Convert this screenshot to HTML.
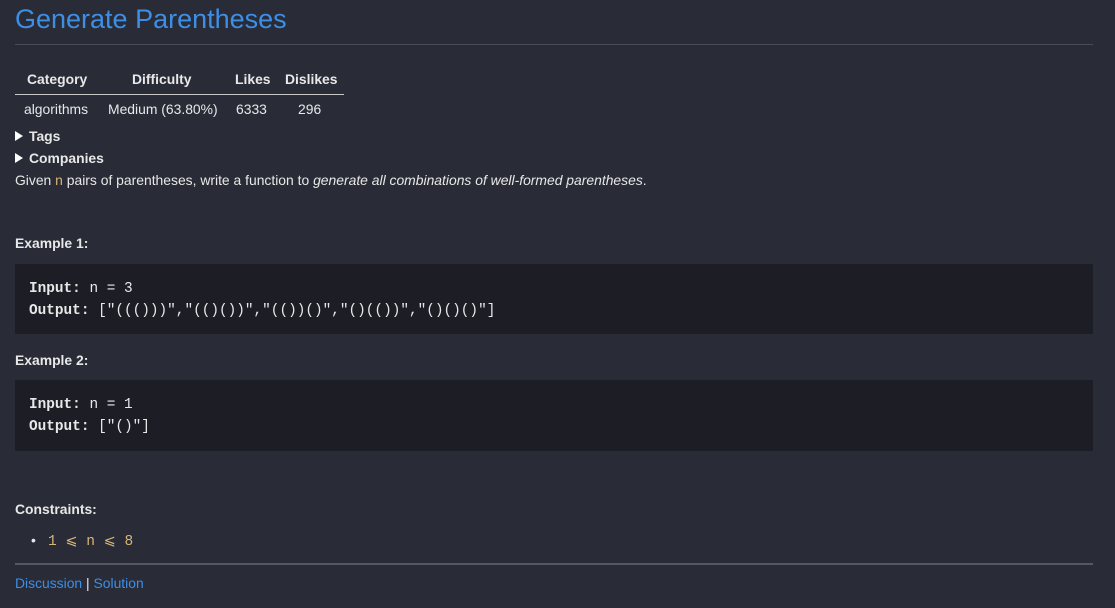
<!DOCTYPE html>
<html><head><style>
body{margin:0;background:#292b36;color:#e8e8e8;font-family:"Liberation Sans",sans-serif;font-size:13.9px;width:1115px;height:608px;overflow:hidden;position:relative}
.a{position:absolute;white-space:nowrap}
h1{position:absolute;left:15px;top:4px;margin:0;font-weight:normal;font-size:27px;color:#3d8fe6}
.hr{position:absolute;left:15px;width:1078px;height:1px;background:#4a4c58}
b{font-weight:bold}
.code{position:absolute;left:15px;width:1078px;background:#1d1e25;font-family:"Liberation Mono",monospace;font-size:14.4px;line-height:22px;color:#e8e8e8}
.y{color:#d7b57a}
a{color:#3d8fe6;text-decoration:none}
.t{display:inline-block;width:0;height:0;border-left:8px solid #fff;border-top:5px solid transparent;border-bottom:5px solid transparent;margin-right:6px;vertical-align:0}
</style></head><body>
<h1>Generate Parentheses</h1>
<div class="hr" style="top:44px"></div>
<div class="a" style="left:27px;top:71px"><b>Category</b></div>
<div class="a" style="left:132px;top:71px"><b>Difficulty</b></div>
<div class="a" style="left:235px;top:71px"><b>Likes</b></div>
<div class="a" style="left:285px;top:71px"><b>Dislikes</b></div>
<div class="hr" style="top:94px;width:329px;background:#c8c8c8"></div>
<div class="a" style="left:24px;top:101px">algorithms</div>
<div class="a" style="left:108px;top:101px">Medium (63.80%)</div>
<div class="a" style="left:236px;top:101px">6333</div>
<div class="a" style="left:298px;top:101px">296</div>
<div class="a" style="left:15px;top:128px"><span class="t"></span><b>Tags</b></div>
<div class="a" style="left:15px;top:150px"><span class="t"></span><b>Companies</b></div>
<div class="a" style="left:15px;top:172px">Given <span class="y">n</span> pairs of parentheses, write a function to <i>generate all combinations of well-formed parentheses</i>.</div>
<div class="a" style="left:15px;top:235px"><b>Example 1:</b></div>
<div class="code" style="top:264px;height:70px"><div style="padding:14px 14px">
<b>Input:</b> n = 3<br><b>Output:</b> ["((()))","(()())","(())()","()(())","()()()"]</div></div>
<div class="a" style="left:15px;top:352px"><b>Example 2:</b></div>
<div class="code" style="top:380px;height:71px"><div style="padding:14px 14px">
<b>Input:</b> n = 1<br><b>Output:</b> ["()"]</div></div>
<div class="a" style="left:15px;top:501px"><b>Constraints:</b></div>
<div class="a" style="left:31px;top:532px">•</div>
<div class="a y" style="left:48px;top:533px;font-family:'Liberation Mono',monospace;font-size:14.5px">1 ⩽ n ⩽ 8</div>
<div class="hr" style="top:563px;height:2px;background:#555763"></div>
<div class="a" style="left:15px;top:575px"><a>Discussion</a> | <a>Solution</a></div>
</body></html>
